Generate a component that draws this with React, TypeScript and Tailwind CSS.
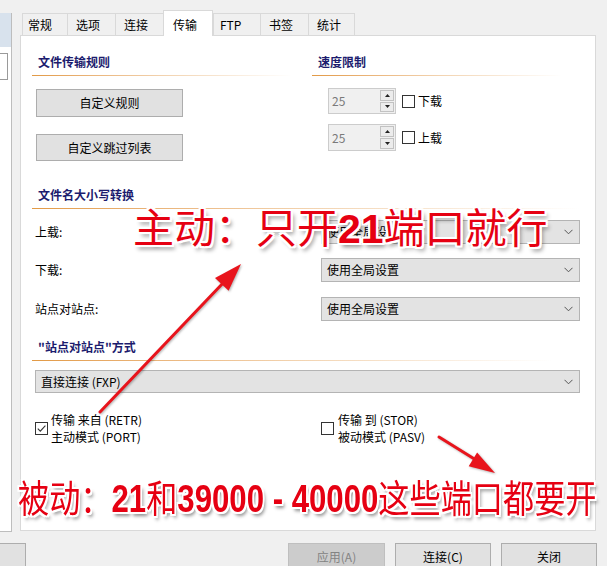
import React from "react";

const tabs = [
  { label: "常规", w: "w-[45px]", pl: "pl-[5px]" },
  { label: "选项", w: "w-[48px]", pl: "pl-[8px]" },
  { label: "连接", w: "w-[48px]", pl: "pl-[8px]" },
  { label: "传输", w: "w-[50px]", pl: "pl-[9px]", active: true },
  { label: "FTP", w: "w-[47px]", pl: "pl-[6px]" },
  { label: "书签", w: "w-[48px]", pl: "pl-[8px]" },
  { label: "统计", w: "w-[47px]", pl: "pl-[8px]" },
];

// white halo + soft grey drop shadow used by the red annotations
const halo =
  "[text-shadow:-2px_-2px_0_#fff,2px_-2px_0_#fff,-2px_2px_0_#fff,2px_2px_0_#fff,0_-2px_0_#fff,0_2px_0_#fff,-2px_0_0_#fff,2px_0_0_#fff,3px_4px_4px_rgba(0,0,0,0.45)]";

function Heading({ children, line = "w-full" }: { children: React.ReactNode; line?: string }) {
  return (
    <div>
      <div className="pl-[6px] leading-[20px] font-bold text-[#1c1c6e]">{children}</div>
      <div className={`mt-[3px] h-px bg-linear-to-r from-[#e29a45] via-[#f2d2ae] to-transparent ${line}`} />
    </div>
  );
}

function Chevron() {
  return (
    <svg width="9" height="6" viewBox="0 0 9 6" className="shrink-0">
      <polyline points="0.5,0.8 4.5,4.8 8.5,0.8" fill="none" stroke="#555" strokeWidth="1" />
    </svg>
  );
}

function Select({ value, className }: { value: string; className: string }) {
  return (
    <div
      className={`flex items-center justify-between border border-[#b4b4b4] bg-[#e3e3e3] pl-[5px] pr-[6px] ${className}`}
    >
      <span>{value}</span>
      <Chevron />
    </div>
  );
}

function Checkbox({ checked = false }: { checked?: boolean }) {
  return (
    <div className="w-[13px] h-[13px] shrink-0 border border-[#333] bg-white">
      {checked && (
        <svg width="11" height="11" viewBox="0 0 11 11">
          <polyline points="1.8,5.6 4.3,8.2 9.4,2.6" fill="none" stroke="#333" strokeWidth="1.1" />
        </svg>
      )}
    </div>
  );
}

function Spin({ value, label, className }: { value: string; label: string; className: string }) {
  return (
    <div className={`flex items-center ${className}`}>
      <div className="flex w-[68px] h-full items-stretch border border-[#cccccc] bg-[#f0f0f0]">
        <span className="flex-1 pl-[3px] flex items-center text-[#7a7a7a]">{value}</span>
        <div className="w-[16px] flex flex-col gap-px p-px">
          <div className="flex-1 flex items-center justify-center border border-[#c2c2c2] bg-[#ececec]">
            <svg width="5" height="3" viewBox="0 0 5 3">
              <polygon points="2.5,0 5,3 0,3" fill="#222" />
            </svg>
          </div>
          <div className="flex-1 flex items-center justify-center border border-[#c2c2c2] bg-[#ececec]">
            <svg width="5" height="3" viewBox="0 0 5 3">
              <polygon points="0,0 5,0 2.5,3" fill="#222" />
            </svg>
          </div>
        </div>
      </div>
      <div className="ml-[6px]">
        <Checkbox />
      </div>
      <span className="ml-[3px]">{label}</span>
    </div>
  );
}

function LeftPane() {
  return (
    <div className="w-[12px] h-full flex flex-col">
      <div className="h-[13px]" />
      <div className="h-[34px] bg-[#d8e2ed] border-r border-[#bdbdbd]" />
      <div className="flex-1 bg-white border-r border-b border-[#bdbdbd]">
        <div className="mt-[6px] w-[8px] h-[27px] border border-l-0 border-[#9a9a9a]" />
      </div>
    </div>
  );
}

function Tabs() {
  return (
    <div className="h-[35px] flex items-end pl-[2px]">
      {tabs.map((t) =>
        t.active ? (
          <div
            key={t.label}
            className={`relative z-10 -mb-px shrink-0 h-[26px] ${t.w} ${t.pl} pt-[3px] leading-[22px] bg-white border-t border-l border-r border-[#d9d9d9]`}
          >
            {t.label}
          </div>
        ) : (
          <div
            key={t.label}
            className={`shrink-0 h-[22px] ${t.w} ${t.pl} leading-[21px] bg-[#f0f0f0] border-t border-l last:border-r border-[#d9d9d9]`}
          >
            {t.label}
          </div>
        )
      )}
    </div>
  );
}

function Panel() {
  return (
    <div className="h-[496px] bg-white border border-[#d9d9d9] pl-[11px] pr-[15px]">
      {/* 文件传输规则 / 速度限制 */}
      <div className="mt-[16px] grid grid-cols-[280px_268px]">
        <div>
          <Heading line="w-[260px]">文件传输规则</Heading>
          <div className="ml-[4px] mt-[13px] w-[147px] h-[28px] flex items-center justify-center border border-[#adadad] bg-[#e1e1e1]">
            自定义规则
          </div>
          <div className="ml-[4px] mt-[17px] w-[147px] h-[27px] flex items-center justify-center border border-[#adadad] bg-[#e1e1e1]">
            自定义跳过列表
          </div>
        </div>
        <div>
          <Heading line="w-[250px]">速度限制</Heading>
          <Spin value="25" label="下载" className="ml-[16px] mt-[12px] h-[26px]" />
          <Spin value="25" label="上载" className="ml-[16px] mt-[10px] h-[27px]" />
        </div>
      </div>

      {/* 文件名大小写转换 */}
      <div className="mt-[24px]">
        <Heading>文件名大小写转换</Heading>
        <div className="mt-[11px] flex items-center h-[24px]">
          <span className="w-[289px] pl-[3px]">上载:</span>
          <Select value="使用全局设置" className="w-[259px] h-[24px]" />
        </div>
        <div className="mt-[14px] flex items-center h-[24px]">
          <span className="w-[289px] pl-[3px]">下载:</span>
          <Select value="使用全局设置" className="w-[259px] h-[24px]" />
        </div>
        <div className="mt-[15px] flex items-center h-[24px]">
          <span className="w-[289px] pl-[3px]">站点对站点:</span>
          <Select value="使用全局设置" className="w-[259px] h-[24px]" />
        </div>
      </div>

      {/* "站点对站点"方式 */}
      <div className="mt-[16px]">
        <Heading line="w-[520px]">"站点对站点"方式</Heading>
        <Select value="直接连接 (FXP)" className="ml-[3px] mt-[9px] w-[545px] h-[23px]" />
        <div className="mt-[18px] flex">
          <div className="w-[289px] pl-[3px] flex items-center">
            <Checkbox checked />
            <div className="ml-[3px] leading-[17px]">
              <div>传输 来自 (RETR)</div>
              <div>主动模式 (PORT)</div>
            </div>
          </div>
          <div className="flex items-center">
            <Checkbox />
            <div className="ml-[4px] leading-[17px]">
              <div>传输 到 (STOR)</div>
              <div>被动模式 (PASV)</div>
            </div>
          </div>
        </div>
      </div>
    </div>
  );
}

function BottomButtons() {
  return (
    <div className="mt-[11px] flex h-[28px]">
      <div className="w-[26px] h-full border border-l-0 border-[#adadad] bg-[#e1e1e1]" />
      <div className="ml-[262px] w-[97px] h-full flex items-center justify-center border border-[#bfbfbf] bg-[#cccccc] text-[#838383]">
        应用(A)
      </div>
      <div className="ml-[10px] w-[96px] h-full flex items-center justify-center border border-[#adadad] bg-[#e1e1e1]">
        连接(C)
      </div>
      <div className="ml-[10px] w-[96px] h-full flex items-center justify-center border border-[#adadad] bg-[#e1e1e1]">
        关闭
      </div>
    </div>
  );
}

function Arrows() {
  return (
    <svg
      className="absolute inset-0 pointer-events-none drop-shadow-[1px_1px_1px_rgba(0,0,0,0.3)]"
      width="607"
      height="566"
      viewBox="0 0 607 566"
    >
      <line x1="100" y1="412" x2="224" y2="282" stroke="#e8141c" strokeWidth="3" strokeLinecap="round" />
      <polygon points="241,264 228.6,290.8 215,278" fill="#e8141c" />
      <line x1="439" y1="437" x2="476" y2="460" stroke="#e8141c" strokeWidth="3" strokeLinecap="round" />
      <polygon points="495,473 468.7,466.2 477.1,452.6" fill="#e8141c" />
    </svg>
  );
}

export default function App() {
  return (
    <div className="relative w-[607px] h-[566px] overflow-hidden bg-[#f0f0f0] text-[12px] text-black font-['Noto_Sans_CJK_SC',sans-serif]">
      <div className="flex h-[532px]">
        <LeftPane />
        <div className="ml-[8px] w-[576px] flex flex-col">
          <Tabs />
          <Panel />
        </div>
      </div>
      <BottomButtons />

      <Arrows />

      {/* annotations */}
      <div
        className={`absolute left-[133px] top-[205px] whitespace-nowrap text-[41px] leading-[48px] text-[#e60012] font-['Liberation_Sans','Noto_Sans_CJK_SC',sans-serif] ${halo}`}
      >
        主动：只开<span className="font-bold">21</span>端口就行
      </div>
      <div
        className={`absolute left-[18px] top-[475px] origin-left scale-x-[0.82] whitespace-nowrap text-[38px] leading-[48px] text-[#e60012] font-['Liberation_Sans','Noto_Sans_CJK_SC',sans-serif] ${halo}`}
      >
        被动：<span className="font-bold">21</span>和<span className="font-bold">39000 - 40000</span>这些端口都要开
      </div>
    </div>
  );
}
